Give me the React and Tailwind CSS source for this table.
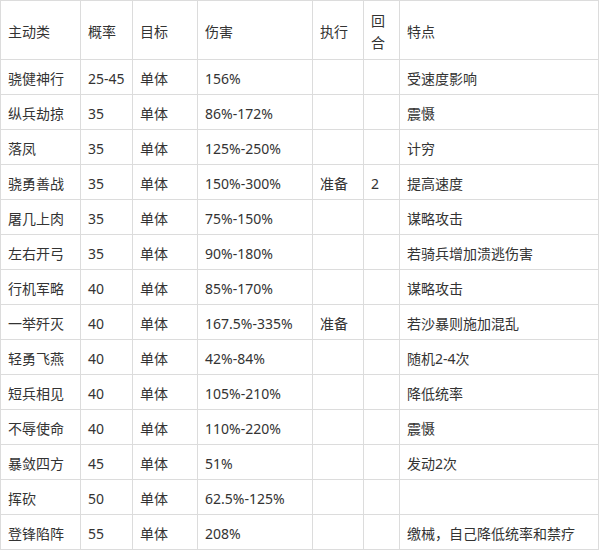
const rows = [
  ["骁健神行", "25-45", "单体", "156%", "", "", "受速度影响"],
  ["纵兵劫掠", "35", "单体", "86%-172%", "", "", "震慑"],
  ["落凤", "35", "单体", "125%-250%", "", "", "计穷"],
  ["骁勇善战", "35", "单体", "150%-300%", "准备", "2", "提高速度"],
  ["屠几上肉", "35", "单体", "75%-150%", "", "", "谋略攻击"],
  ["左右开弓", "35", "单体", "90%-180%", "", "", "若骑兵增加溃逃伤害"],
  ["行机军略", "40", "单体", "85%-170%", "", "", "谋略攻击"],
  ["一举歼灭", "40", "单体", "167.5%-335%", "准备", "", "若沙暴则施加混乱"],
  ["轻勇飞燕", "40", "单体", "42%-84%", "", "", "随机2-4次"],
  ["短兵相见", "40", "单体", "105%-210%", "", "", "降低统率"],
  ["不辱使命", "40", "单体", "110%-220%", "", "", "震慑"],
  ["暴敛四方", "45", "单体", "51%", "", "", "发动2次"],
  ["挥砍", "50", "单体", "62.5%-125%", "", "", ""],
  ["登锋陷阵", "55", "单体", "208%", "", "", "缴械，自己降低统率和禁疗"],
];

const header = ["主动类", "概率", "目标", "伤害", "执行", "回合", "特点"];

function Cell({ children, tall }) {
  return (
    <div
      className={
        "flex items-center px-[7px] pt-[3px] border-r border-b border-[#dcdcdc] leading-[22px] break-all " +
        (tall ? "h-[59px]" : "h-[35px]")
      }
    >
      <span>{children}</span>
    </div>
  );
}

export default function App() {
  return (
    <div
      className="w-[600px] h-[552px] bg-white text-[14px] text-[#333333]"
      style={{ fontFamily: '"Noto Sans", "Noto Sans CJK SC", sans-serif' }}
    >
      <div className="grid grid-cols-[80px_52px_65px_115px_51px_36px_199px] w-[599px] border-l border-t border-[#dcdcdc]">
        {header.map((h, i) => (
          <Cell key={"h" + i} tall>
            {h}
          </Cell>
        ))}
        {rows.map((r, ri) =>
          r.map((c, ci) => <Cell key={ri + "-" + ci}>{c}</Cell>)
        )}
      </div>
    </div>
  );
}
